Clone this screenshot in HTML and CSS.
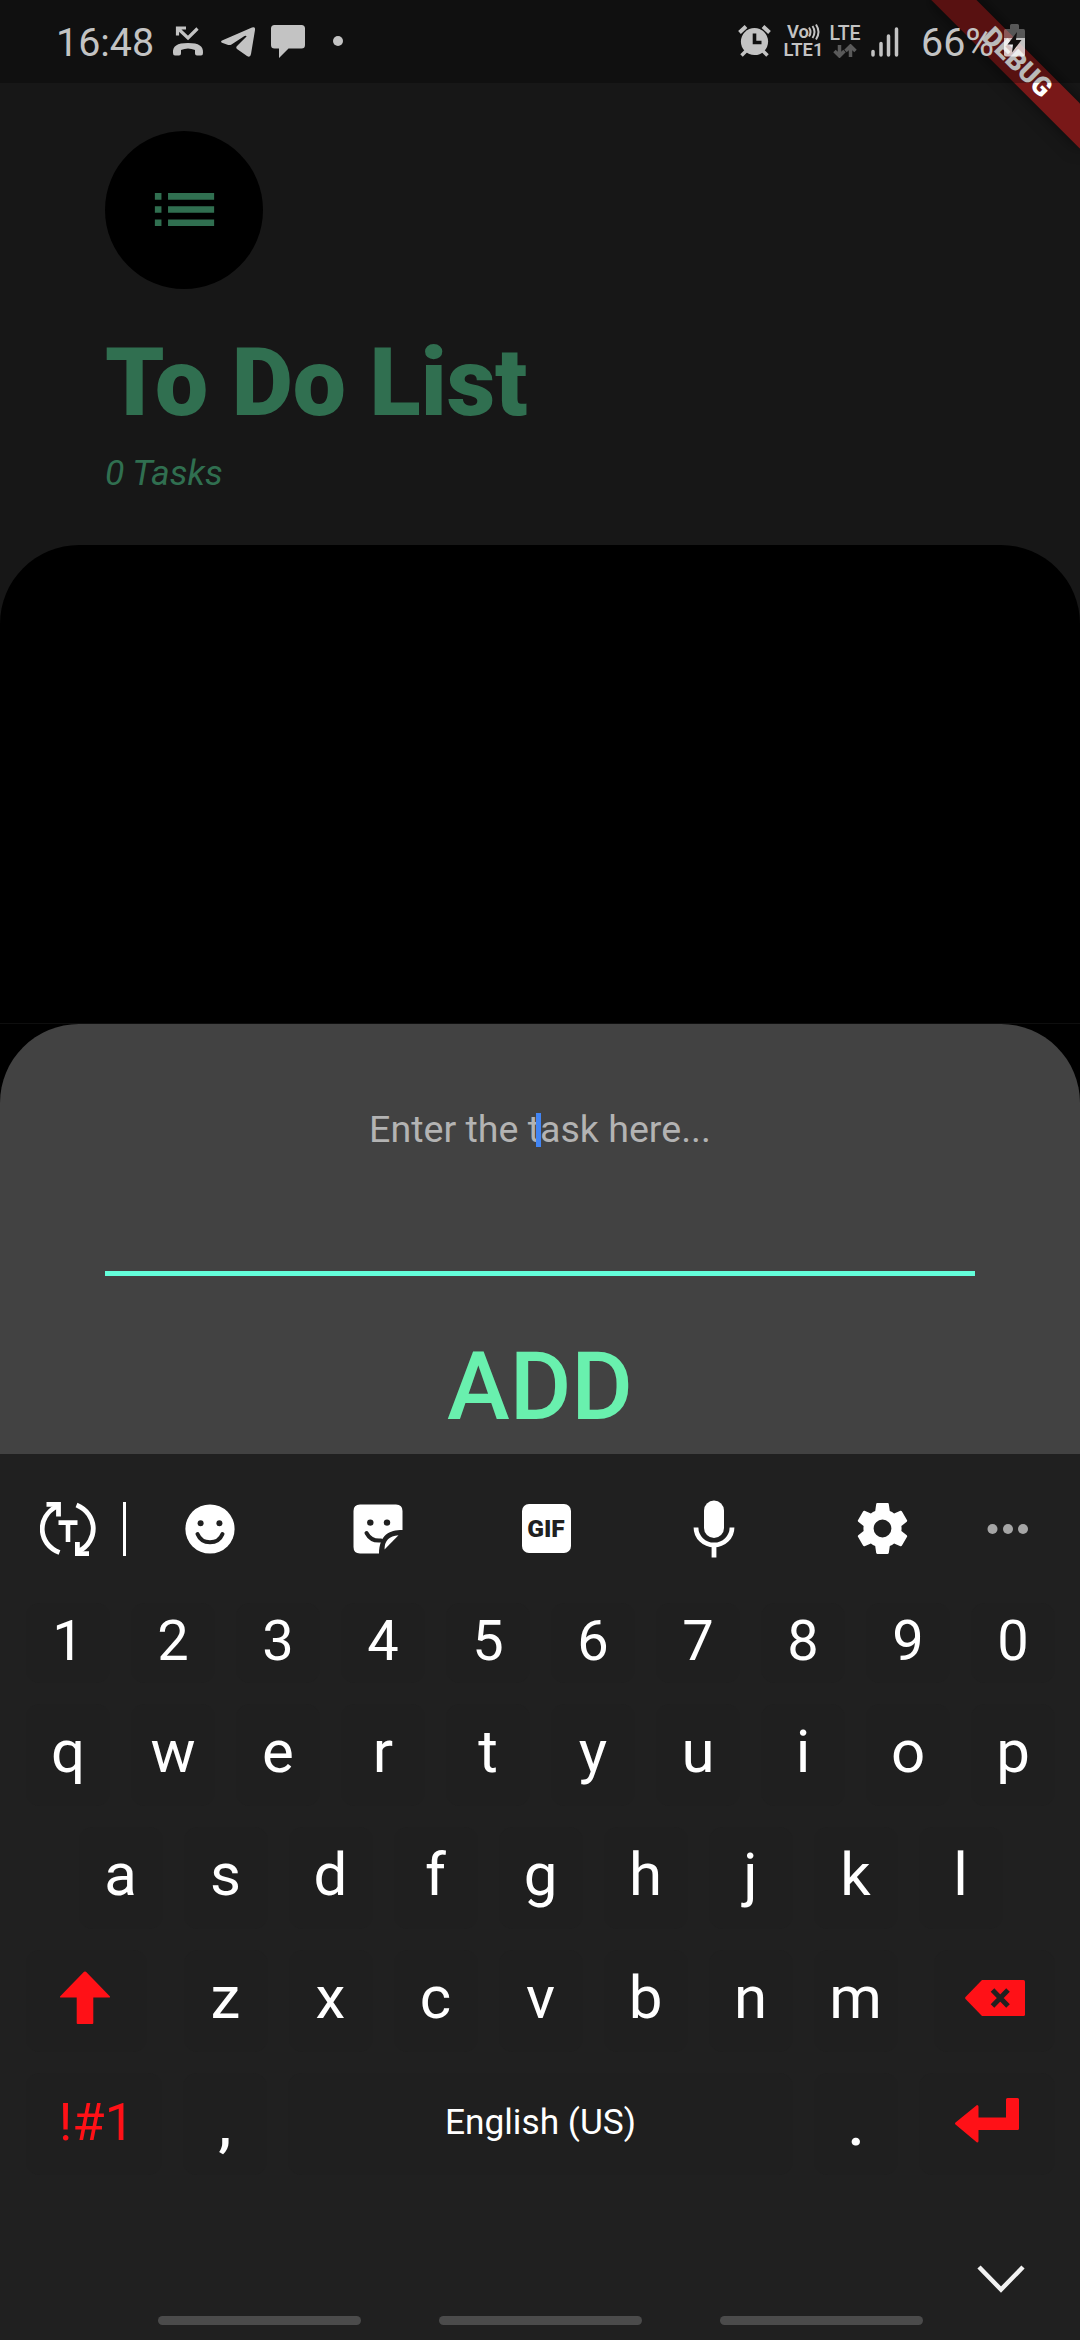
FILE: index.html
```
<!DOCTYPE html>
<html lang="en">
<head>
<meta charset="utf-8">
<title>To Do List</title>
<link rel="stylesheet" href="styles.css">
</head>
<body>
<div class="screen">
  <div class="debug-clip"><div class="debug-banner">DEBUG</div></div>
  <div class="status-bar">
    <div class="status-left">
      <span class="clock">16:48</span>
      <svg class="ic-missed" width="32" height="32" viewBox="0 0 32 32"><path d="M5.5 10.500V3H14M6 3.500L16 13L25.500 3.500" fill="none" stroke="#c3c3c3" stroke-width="3.200"/><path d="M1 28C.5 21 5 18 16 18s15.500 3 15 10q0 2.500-2 2.500h-4q-2 0-2-2v-3.500q-7-3-14 0V28.500q0 2-2 2H3q-2 0-2-2.500z" fill="#c3c3c3"/></svg>
      <svg class="ic-telegram" width="34" height="30" viewBox="0 0 34 30"><path d="M1 13.500L31 .6Q34.500-.5 34 3L30 27Q29.300 31 26 29L16 22Q14.500 20.500 16 19L25.500 9.500Q25.500 8.200 23.500 9L10.500 17.500Q8.500 18.500 6.500 17.700L1 15.800Q-.8 14.600 1 13.500z" fill="#c3c3c3"/></svg>
      <svg class="ic-chat" width="34" height="33" viewBox="0 0 34 33"><path d="M3.500 0h27Q34 0 34 3.500V20q0 3.500-3.500 3.500H17.500L8 33V23.500H3.500Q0 23.500 0 20V3.500Q0 0 3.500 0z" fill="#c3c3c3"/></svg>
      <span class="status-dot"></span>
    </div>
    <div class="status-right">
      <svg width="33" height="32" viewBox="0 0 33 32"><g stroke="#c3c3c3" stroke-width="4" fill="none"><path d="M1.500 7.500L8 1.500M31.500 7.500L25 1.500"/><path d="M8 26L3.500 30.500M25 26L29.500 30.500" stroke-width="3.500"/></g><circle cx="16.500" cy="16.500" r="13.600" fill="#c3c3c3"/><path d="M16.500 8.500v9h7" fill="none" stroke="#111" stroke-width="3.600"/></svg>
      <div class="volte"><span>Vo<svg width="12" height="18" viewBox="0 0 12 18"><path d="M1 4.500q3 4.500 0 9M4.500 3q4 6 0 12M8 1.500q5 7.500 0 15" fill="none" stroke="#c3c3c3" stroke-width="2"/></svg></span><span>LTE1</span></div>
      <div class="lte"><span>LTE</span><svg width="24" height="14" viewBox="0 0 24 14"><path d="M6.500 1v10M1.500 7l5 5 5-5M17.500 13V3M12.500 7l5-5 5 5" fill="none" stroke="#5a5a5a" stroke-width="3.500"/></svg></div>
      <svg class="ic-signal" width="28" height="30" viewBox="0 0 28 30"><path d="M2 24.500V28M10 16.500V28M17.500 9V28M25.500 2V28" fill="none" stroke="#c3c3c3" stroke-width="3.500" stroke-linecap="round"/></svg>
      <span class="percent">66%</span>
      <svg class="ic-battery" width="21" height="33" viewBox="0 0 21 33"><path d="M6 5V1.500Q6 0 7.500 0h6Q15 0 15 1.500V5h4.500Q21 5 21 7v7H0V7q0-2 1.500-2z" fill="#fff" opacity=".3"/><path d="M0 14h21v16.500q0 2-2 2H2q-2 0-2-2z" fill="#fff" opacity=".75"/><path d="M13 8L3.500 20.500H9L8 28.500 17.500 16H12z" fill="#131010"/></svg>
    </div>
  </div>

  <header class="header">
    <div class="avatar"><svg width="79" height="79" viewBox="0 0 24 24"><path d="M3 13h2v-2H3v2zm0 4h2v-2H3v2zm0-8h2V7H3v2zm4 4h14v-2H7v2zm0 4h14v-2H7v2zM7 7v2h14V7H7z" fill="#306f50"/></svg></div>
    <h1 class="title">To Do List</h1>
    <p class="count">0 Tasks</p>
  </header>
  <main class="tasks"><div class="tasks-panel"></div></main>

  <section class="sheet-wrap">
    <div class="sheet">
      <div class="field"><span class="hint">Enter the task here...</span><i class="caret"></i></div>
      <div class="add">ADD</div>
    </div>
  </section>

  <section class="keyboard">
    <div class="toolbar">
      <div class="tool first"><svg width="56" height="56" viewBox="0 0 56 56"><g fill="none" stroke="#fff" stroke-width="4.800"><path d="M19.500 51.500C-2.500 43-3.500 16 16.500 5.500M36.500 4C58 13 59 40 38.500 50.500"/><path d="M6.500 3.400h12v12M49 52.600H37.400V41"/></g><path d="M18.500 19.300h19v4.600h-7.200V41h-4.600V23.900h-7.200z" fill="#fff"/></svg></div>
      <i class="divider"></i>
      <div class="tool"><svg width="50" height="50" viewBox="0 0 50 50"><circle cx="25" cy="25" r="24.600" fill="#fff"/><circle cx="15.600" cy="19.300" r="3" fill="#202020"/><circle cx="34.400" cy="19.300" r="3" fill="#202020"/><path d="M12.500 30c4.500 11 20.500 11 25 0" fill="none" stroke="#202020" stroke-width="4" stroke-linecap="round"/></svg></div>
      <div class="tool"><svg width="50" height="50" viewBox="0 0 50 50"><path d="M7 .5h36q6.500 0 6.500 6.500V26C36 26 26.500 31 26 49.500H7Q.5 49.500 .5 43V7Q.5 .5 7 .5z" fill="#fff"/><circle cx="17.300" cy="18.600" r="3.200" fill="#202020"/><circle cx="34" cy="18.600" r="3.200" fill="#202020"/><path d="M13.500 29Q18 37.500 28 36.500" fill="none" stroke="#202020" stroke-width="4" stroke-linecap="round"/><path d="M31.500 45.500Q31.500 32 45.500 31.200z" fill="#fff"/></svg></div>
      <div class="tool"><span class="gif">GIF</span></div>
      <div class="tool"><svg width="42" height="58" viewBox="0 0 42 58"><rect x="11" y="0.500" width="20" height="37.500" rx="10" fill="#fff"/><path d="M3 27.500a18 17.500 0 0 0 36 0M21 46v11.500" fill="none" stroke="#fff" stroke-width="4.800"/></svg></div>
      <div class="tool"><svg width="61" height="61" viewBox="0 0 24 24"><path d="M19.430 12.980c.04-.32.070-.64.070-.98s-.03-.66-.07-.98l2.110-1.650c.19-.15.24-.42.120-.64l-2-3.460c-.12-.22-.39-.3-.61-.22l-2.490 1c-.52-.4-1.080-.73-1.690-.98l-.38-2.650C14.460 2.180 14.250 2 14 2h-4c-.25 0-.46.180-.49.420l-.38 2.650c-.61.250-1.170.59-1.690.98l-2.490-1c-.23-.09-.49 0-.61.220l-2 3.460c-.13.220-.07.490.120.640l2.110 1.650c-.04.320-.07.650-.07.980s.03.660.07.980l-2.110 1.650c-.19.150-.24.420-.12.640l2 3.460c.12.220.39.300.610.220l2.490-1c.52.400 1.080.730 1.690.980l.38 2.650c.03.240.240.420.490.420h4c.25 0 .460-.18.490-.42l.38-2.650c.61-.25 1.170-.59 1.690-.98l2.490 1c.23.090.490 0 .610-.22l2-3.460c.12-.22.070-.49-.12-.64l-2.110-1.650zM12 15.500a3.500 3.500 0 1 1 0-7 3.500 3.500 0 0 1 0 7z" fill="#fff"/></svg></div>
      <div class="tool last"><svg width="42" height="12" viewBox="0 0 42 12"><g fill="#a6a6a6"><circle cx="5.500" cy="6" r="5"/><circle cx="21" cy="6" r="5"/><circle cx="36" cy="6" r="5"/></g></svg></div>
    </div>
    <div class="keys">
      <div class="row nums"><b>1</b><b>2</b><b>3</b><b>4</b><b>5</b><b>6</b><b>7</b><b>8</b><b>9</b><b>0</b></div>
      <div class="row"><b>q</b><b>w</b><b>e</b><b>r</b><b>t</b><b>y</b><b>u</b><b>i</b><b>o</b><b>p</b></div>
      <div class="row center"><b>a</b><b>s</b><b>d</b><b>f</b><b>g</b><b>h</b><b>j</b><b>k</b><b>l</b></div>
      <div class="row spread">
        <b class="wide"><svg width="52" height="53" viewBox="0 0 52 53"><path d="M25 .8q1-.8 2 0L51 25.500q.5 1-.5 1H34.300V52q0 1-1 1H18.700q-1 0-1-1V26.500H1.500q-1 0-.5-1z" fill="#ff1117"/></svg></b>
        <div class="row"><b>z</b><b>x</b><b>c</b><b>v</b><b>b</b><b>n</b><b>m</b></div>
        <b class="wide right"><svg width="60" height="36" viewBox="0 0 60 36"><path d="M17 0h41.500Q60 0 60 1.500v33q0 1.500-1.500 1.500H17L.5 19Q-.2 18 .5 17z" fill="#ff1117"/><path d="M27.500 10l15.500 16M43 10L27.500 26" stroke="#202020" stroke-width="5"/></svg></b>
      </div>
      <div class="row">
        <b class="wider sym">!#1</b><b class="punct">,</b><b class="space">English (US)</b><b class="punct">.</b>
        <b class="wider enter"><svg width="64" height="45" viewBox="0 0 64 45"><path d="M52.500 0h10Q64 0 64 1.500v29q0 1.500-1.500 1.500H23.500V43q0 1.500-1.500 1.500L.5 26.500Q-.5 25.500 .5 24.500L22 7q1.500 0 1.500 1.500V19.500H51V1.500Q51 0 52.500 0z" fill="#ff1117"/></svg></b>
      </div>
    </div>
    <div class="hide-key"><svg width="48" height="28" viewBox="0 0 48 28"><path d="M2 2L24 24.500 46 2" fill="none" stroke="#f2f2f2" stroke-width="4.500"/></svg></div>
    <div class="nav"><i></i><i></i><i></i></div>
  </section>
</div>
</body>
</html>
```

FILE: styles.css
```
* { box-sizing: border-box; }
body { margin: 0; background: #000; font-family: Roboto, "Noto Sans", sans-serif; }
svg { display: block; flex: none; }

.screen { position: relative; width: 1080px; height: 2340px; overflow: hidden; display: flex; flex-direction: column; }

/* Overlays */
.debug-clip { position: absolute; inset: 0; overflow: hidden; pointer-events: none; z-index: 1; }
.debug-banner {
  position: absolute; left: 911.9px; top: 47.4px; width: 210px; height: 31.5px;
  transform: rotate(45deg);
  background: #791818; color: #fff; box-shadow: 0 0 16px rgba(0,0,0,.5);
  font-size: 26.8px; font-weight: 900; line-height: 31.5px; text-align: center;
}
.status-bar {
  position: absolute; left: 0; top: 0; width: 1080px; height: 83px; z-index: 2;
  background: rgba(0,0,0,.27); color: #c3c3c3;
  display: flex; justify-content: space-between; padding: 0 55px 0 56px;
}
.status-left, .status-right { display: flex; align-items: center; height: 81px; }
.clock, .percent { font-size: 39.4px; line-height: 46px; margin-top: 4px; }
.clock { width: 96px; }
.ic-missed { margin-left: 20px; }
.ic-telegram { margin: 3px 0 0 17px; }
.ic-chat { margin: 2px 0 0 16px; }
.status-dot { width: 10px; height: 10px; border-radius: 50%; background: #c3c3c3; margin-left: 28px; }
.volte { margin-left: 11px; width: 43px; font-size: 18.4px; font-weight: 600; line-height: 18px; display: flex; flex-direction: column; align-items: center; }
.volte span { display: flex; }
.volte svg { margin-left: -1px; }
.lte { margin-left: 3px; width: 34px; font-size: 19.5px; font-weight: 500; line-height: 20px; display: flex; flex-direction: column; align-items: center; }
.ic-signal { margin: 2px 0 0 9px; }
.percent { margin-left: 22px; width: 73px; }
.ic-battery { margin-left: 10px; }

/* App */
.header { flex: none; height: 545px; padding: 131px 105px 0; background: #171717; color: #306f50; }
.avatar { width: 158px; height: 158px; padding-bottom: 2px; border-radius: 50%; background: #000; display: flex; align-items: center; justify-content: center; }
.title { margin: 38px 0 0; font-size: 94.5px; line-height: 111px; font-weight: 900; white-space: nowrap; }
.count { margin: 14px 0 0; font-size: 35.5px; line-height: 43px; font-style: italic; }
.tasks { flex: none; height: 478px; background: #171717; }
.tasks-panel { height: 100%; background: #000; border-radius: 79px 79px 0 0; }

/* Bottom sheet */
.sheet-wrap { flex: none; height: 431px; background: #000; border-top: 1px solid #0e0e0e; }
.sheet { height: 430px; background: #424242; border-radius: 79px 79px 0 0; padding: 79px 105px 0; }
.field { position: relative; height: 173px; border-bottom: 5px solid #64ffda; text-align: center; font-size: 37.6px; line-height: 53px; color: #b3b3b3; }
.caret { position: absolute; left: 431px; top: 10px; width: 5px; height: 34px; background: #4285f4; }
.add { margin-top: 55px; text-align: center; font-size: 94.5px; line-height: 111px; font-weight: 500; color: #69f0ae; }

/* Keyboard */
.keyboard { flex: none; height: 886px; background: #202020; color: #fff; display: flex; flex-direction: column; }
.toolbar { height: 149px; display: flex; align-items: center; }
.tool { width: 168px; display: flex; justify-content: center; }
.tool.first { width: 123px; justify-content: flex-start; padding-left: 40px; }
.tool.last { width: 83px; }
.divider { width: 3px; height: 54px; background: #fff; }
.gif { width: 49px; height: 49px; border-radius: 7px; background: #fff; color: #202020; font-size: 24.5px; font-weight: 900; line-height: 50px; text-align: center; }
.keys { padding: 0 25px 0 26px; display: flex; flex-direction: column; gap: 21px; }
.row { display: flex; gap: 21px; height: 102px; }
.row.nums { height: 80px; }
.row.center { justify-content: center; }
.row.spread { justify-content: space-between; gap: 0; }
.row b { width: 84px; height: 100%; flex: none; border-radius: 14px; background: #1f1f1f; font-weight: 400; font-size: 60px; display: flex; align-items: center; justify-content: center; padding-bottom: 7px; }
.row.nums b { font-size: 56px; padding-bottom: 4px; }
.row b.wide { width: 121px; padding: 0 4px 8px 0; }
.row b.wide.right { padding: 0 0 6px; }
.row b.wider { width: 136px; }
.row b.enter { padding: 0 0 7px; }
.row b.sym { font-size: 52.5px; padding: 0 0 4px 5px; color: #ff1117; }
.row b.space { flex: 1; font-size: 35.3px; padding-bottom: 4px; }
.row b.punct { padding: 1px 0 0; font-weight: 500; }
.hide-key { display: flex; justify-content: flex-end; padding: 90px 55px 0 0; }
.nav { display: flex; justify-content: center; gap: 78px; margin-top: 23px; }
.nav i { width: 203px; height: 9px; border-radius: 5px; background: #4b4b4b; }
```
